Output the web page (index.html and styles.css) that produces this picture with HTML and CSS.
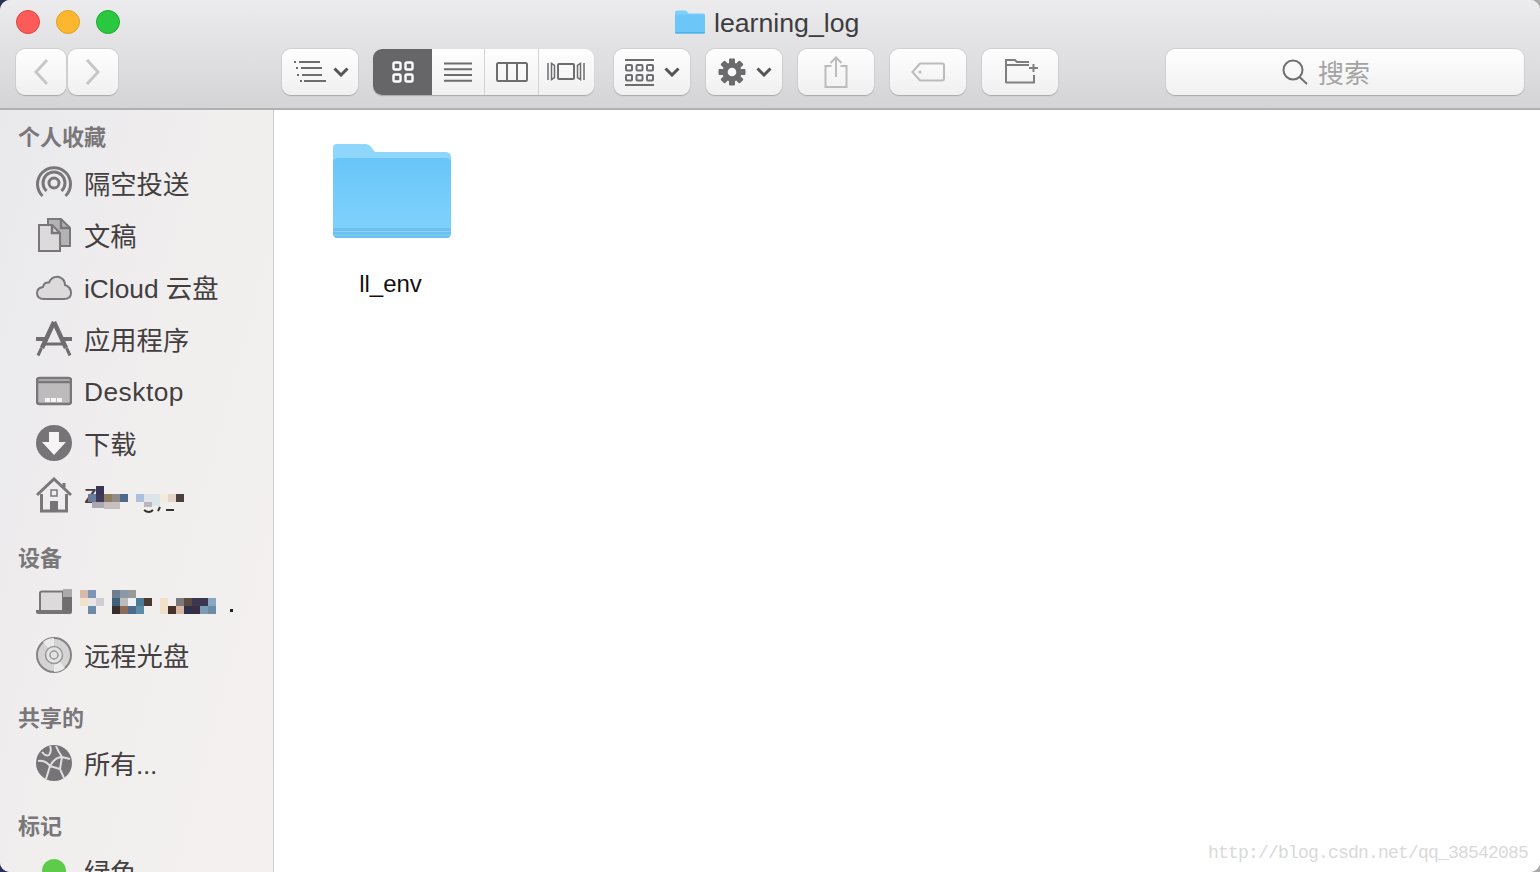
FILE: index.html
```html
<!DOCTYPE html>
<html lang="zh">
<head>
<meta charset="utf-8">
<title>learning_log</title>
<link rel="stylesheet" href="styles.css">
</head>
<body>
<div class="window">
  <header class="chrome">
    <div class="titlebar">
      <div class="lights"><i class="light red"></i><i class="light amber"></i><i class="light green"></i></div>
      <div class="title">
        <svg class="title-icon" width="32" height="26" viewBox="0 0 32 26"><path d="M1 3.500Q1 1.500 3 1.500H11Q12.500 1.500 13.500 3L14.500 4.500H29Q31 4.500 31 6.500V23Q31 25 29 25H3Q1 25 1 23Z" fill="#7fd0fa"/><path d="M1 7Q1 5.500 3 5.500H29Q31 5.500 31 7V23Q31 25 29 25H3Q1 25 1 23Z" fill="#6cc6f7"/><path d="M1 23.500H31" stroke="#57aee0" stroke-width="1"/></svg>
        <span>learning_log</span>
      </div>
    </div>
    <div class="toolbar">
      <div class="nav">
        <button class="btn nav-btn"><svg width="16" height="28" viewBox="0 0 16 28"><path d="M14 2L3 14L14 26" class="s-light"/></svg></button>
        <button class="btn nav-btn"><svg width="16" height="28" viewBox="0 0 16 28"><path d="M2 2L13 14L2 26" class="s-light"/></svg></button>
      </div>
      <button class="btn drop list-drop">
        <svg width="32" height="22" viewBox="0 0 32 22"><path d="M0 1h2M5 1h21M2 7h2M7 7h21M3 14h2M8 14h20M6 20h2M10 20h22" class="s-dark2"/></svg>
        <svg class="chev" width="16" height="10" viewBox="0 0 16 10"><path d="M1.500 1.500L8 8L14.500 1.500" class="s-chev"/></svg>
      </button>
      <div class="segment">
        <div class="seg on"><svg width="22" height="22" viewBox="0 0 22 22"><rect x="1.500" y="1.500" width="7" height="7" rx="1.500"/><rect x="13.500" y="1.500" width="7" height="7" rx="1.500"/><rect x="1.500" y="13.500" width="7" height="7" rx="1.500"/><rect x="13.500" y="13.500" width="7" height="7" rx="1.500"/></svg></div>
        <div class="seg s2"><svg width="28" height="20" viewBox="0 0 28 20"><path d="M0 1.500h28M0 7.300h28M0 13h28M0 18.800h28" class="s-dark2"/></svg></div>
        <div class="seg s3"><svg width="32" height="20" viewBox="0 0 32 20"><rect x="1" y="1" width="30" height="18" rx="1.500" class="s-dark2"/><path d="M11 1v18M21 1v18" class="s-dark2"/></svg></div>
        <div class="seg s4"><svg width="38" height="20" viewBox="0 0 38 20"><rect x="11" y="2" width="16" height="15" rx="1" class="s-dark2"/><path d="M1 1v17M4.500 1.500v16l3-2v-12ZM37 1v17M33.500 1.500v16l-3-2v-12Z" class="s-dark15"/></svg></div>
      </div>
      <button class="btn drop arrange">
        <svg width="29" height="27" viewBox="0 0 29 27"><path d="M0 1h29M0 26h29" class="s-dark2"/><rect x="1" y="6" width="6" height="5.500" rx="1" class="s-dark2"/><rect x="11.500" y="6" width="6" height="5.500" rx="1" class="s-dark2"/><rect x="22" y="6" width="6" height="5.500" rx="1" class="s-dark2"/><rect x="1" y="16" width="6" height="5.500" rx="1" class="s-dark2"/><rect x="11.500" y="16" width="6" height="5.500" rx="1" class="s-dark2"/><rect x="22" y="16" width="6" height="5.500" rx="1" class="s-dark2"/></svg>
        <svg class="chev" width="16" height="10" viewBox="0 0 16 10"><path d="M1.500 1.500L8 8L14.500 1.500" class="s-chev"/></svg>
      </button>
      <button class="btn drop gear">
        <svg width="28" height="28" viewBox="0 0 28 28"><g class="gear-fill"><circle cx="14" cy="14" r="9.500"/><rect x="11" y="0.500" width="6" height="27" rx="1"/><rect x="11" y="0.500" width="6" height="27" rx="1" transform="rotate(45 14 14)"/><rect x="11" y="0.500" width="6" height="27" rx="1" transform="rotate(90 14 14)"/><rect x="11" y="0.500" width="6" height="27" rx="1" transform="rotate(135 14 14)"/></g><circle cx="14" cy="14" r="4.300" class="gear-hole"/></svg>
        <svg class="chev" width="16" height="10" viewBox="0 0 16 10"><path d="M1.500 1.500L8 8L14.500 1.500" class="s-chev"/></svg>
      </button>
      <button class="btn plain"><svg width="24" height="32" viewBox="0 0 24 32"><path d="M7.500 10H1.500V31H22.500V10H16.500M12 21V2M6.500 7L12 1.500L17.500 7" class="s-faint"/></svg></button>
      <button class="btn plain"><svg width="34" height="20" viewBox="0 0 34 20"><path d="M9 1.500H31Q33 1.500 33 3.500V16.500Q33 18.500 31 18.500H9L1.500 10Z" class="s-faint"/><circle cx="9" cy="10" r="1.600" class="faint-dot"/></svg></button>
      <button class="btn plain new-folder"><svg width="34" height="25" viewBox="0 0 34 25"><path d="M1 24V1H10L12 3H24M1 6H24M30 23.500H1M29 24V16M24 9H33M28.500 5V13" class="s-dark2b"/></svg></button>
      <div class="search">
        <svg width="26" height="26" viewBox="0 0 26 26"><circle cx="11" cy="11" r="9.500" class="s-search"/><path d="M17.500 18L25 25" class="s-search"/></svg>
        <span>搜索</span>
      </div>
    </div>
  </header>
  <div class="body">
    <aside class="sidebar">
      <section class="group">
        <h2 class="first">个人收藏</h2>
        <div class="item"><svg width="36" height="36" viewBox="0 0 36 36"><g class="ic air"><path d="M6.500 31A16.500 16.500 0 1 1 29.500 31"/><path d="M10.500 26A11 11 0 1 1 25.500 26"/><circle cx="18" cy="18" r="5"/></g></svg><span>隔空投送</span></div>
        <div class="item"><svg width="36" height="36" viewBox="0 0 36 36"><path d="M12 2H25L34 11V29H12Z" class="fill-mid"/><path d="M25 2V11H34" class="ic"/><path d="M3 8H16L24 16V34H3Z" class="fill-soft"/><path d="M16 8V16H24" class="ic"/></svg><span>文稿</span></div>
        <div class="item"><svg width="36" height="36" viewBox="0 0 36 36"><path d="M8 30Q1 30 1 24Q1 19 7 18Q8 13 13 13.500Q16 7 23 8Q29 10 29 16Q35 18 35 24Q35 30 28 30Z" class="fill-soft"/></svg><span>iCloud 云盘</span></div>
        <div class="item"><svg width="36" height="36" viewBox="0 0 36 36"><g class="app"><path d="M18 1L6 27M18 1L30 27" stroke-width="4.500"/><path d="M0 18H12M24 18H36" stroke-width="4"/><path d="M9 23H27" stroke-width="3"/><path d="M5.500 27L2 34.500M30.500 27L34 34.500" stroke-width="3"/></g></svg><span>应用程序</span></div>
        <div class="item"><svg width="36" height="36" viewBox="0 0 36 36"><rect x="1" y="5" width="34" height="26" rx="2.500" class="fill-mac"/><path d="M1 9H35" class="ic"/><path d="M9 25h5v4h-5zM15 25h5v4h-5zM21 25h5v4h-5z" class="white"/></svg><span class="latin">Desktop</span></div>
        <div class="item"><svg width="36" height="36" viewBox="0 0 36 36"><circle cx="18" cy="18" r="18" class="solid"/><path d="M13 7H23V17H30L18 30L6 17H13Z" class="white"/></svg><span>下载</span></div>
        <div class="item user"><svg width="36" height="36" viewBox="0 0 36 36"><path d="M1 18L18 2L35 18M28 6V11" class="ic-thick"/><path d="M5.500 17V34H30.500V17" class="ic-thick"/><rect x="15" y="13" width="6" height="6" class="ic-thin"/><rect x="14" y="24" width="8" height="10" class="solid"/></svg>
          <span>z</span>
          <svg class="mosaic-user" width="105" height="32" viewBox="0 0 105 32"><path d="M60 24Q65 28 69 24M74 25L76 21M82 24H90" class="frag"/><rect x="12" y="0" width="8" height="8" fill="#3a3555"/><rect x="4" y="8" width="8" height="8" fill="#6b7b9d"/><rect x="12" y="8" width="8" height="8" fill="#3f3a5a"/><rect x="20" y="8" width="8" height="8" fill="#8f7d62"/><rect x="28" y="8" width="8" height="8" fill="#908b87"/><rect x="36" y="8" width="8" height="8" fill="#4e6b8c"/><rect x="8" y="16" width="12" height="6" fill="#aaa8b0"/><rect x="20" y="16" width="16" height="7" fill="#c8c0c0"/><rect x="52" y="8" width="8" height="8" fill="#acc0dc"/><rect x="60" y="16" width="8" height="5" fill="#b8b8bc"/><rect x="60" y="8" width="8" height="8" fill="#e0e4ea"/><rect x="68" y="8" width="8" height="12" fill="#dce6ea"/><rect x="76" y="8" width="8" height="8" fill="#f2ecdc"/><rect x="84" y="8" width="8" height="8" fill="#e5d5c8"/><rect x="92" y="8" width="8" height="8" fill="#4a3f3c"/></svg>
        </div>
      </section>
      <section class="group">
        <h2>设备</h2>
        <div class="item device"><svg width="36" height="36" viewBox="0 0 36 36"><path d="M4 26V8Q4 6.500 6 6.500H27V26Z" class="fill-soft"/><path d="M0 25H36V27Q36 29 34 29H2Q0 29 0 27Z" class="solid"/><rect x="27" y="4" width="9" height="8" fill="#ababab"/><rect x="27" y="12" width="9" height="14" fill="#6f6f6f"/></svg>
          <svg class="mosaic-device" width="160" height="26" viewBox="0 0 160 26"><g><rect x="0" y="0" width="8" height="8" fill="#d9b9a9"/><rect x="8" y="0" width="8" height="8" fill="#7b96b6"/><rect x="0" y="8" width="8" height="8" fill="#f0e1ca"/><rect x="8" y="8" width="8" height="8" fill="#e8e4e8"/><rect x="16" y="8" width="8" height="8" fill="#d0ccd2"/><rect x="8" y="16" width="8" height="8" fill="#6b8ba6"/><rect x="32" y="0" width="8" height="8" fill="#6f7f8f"/><rect x="40" y="0" width="8" height="8" fill="#8898a6"/><rect x="48" y="0" width="8" height="8" fill="#999"/><rect x="32" y="8" width="8" height="8" fill="#3f5f7b"/><rect x="40" y="8" width="8" height="8" fill="#bdbdbd"/><rect x="48" y="8" width="8" height="8" fill="#edf0f5"/><rect x="56" y="8" width="8" height="8" fill="#4a7a96"/><rect x="64" y="8" width="8" height="8" fill="#4a3a30"/><rect x="32" y="16" width="8" height="8" fill="#3a2e2a"/><rect x="40" y="16" width="8" height="8" fill="#8b6b59"/><rect x="48" y="16" width="8" height="8" fill="#4f6b8b"/><rect x="56" y="16" width="8" height="8" fill="#5b8ba6"/><rect x="80" y="8" width="8" height="16" fill="#f0e1c8"/><rect x="96" y="8" width="8" height="8" fill="#7a7a7a"/><rect x="104" y="8" width="8" height="8" fill="#5a4a40"/><rect x="112" y="8" width="16" height="8" fill="#3a3550"/><rect x="128" y="8" width="8" height="8" fill="#8ba6c1"/><rect x="88" y="16" width="8" height="8" fill="#4a3028"/><rect x="96" y="16" width="8" height="8" fill="#d9b9a1"/><rect x="104" y="16" width="8" height="8" fill="#2e3050"/><rect x="112" y="16" width="8" height="8" fill="#3a2e40"/><rect x="120" y="16" width="8" height="8" fill="#7b9bb6"/><rect x="128" y="16" width="8" height="8" fill="#6b8ba6"/><rect x="150" y="19" width="3" height="3" fill="#222"/></g></svg>
        </div>
        <div class="item"><svg width="36" height="36" viewBox="0 0 36 36"><circle cx="18" cy="18" r="17" class="disc"/><path d="M18 18L7 5A17 17 0 0 1 18 1ZM18 18L29 31A17 17 0 0 1 18 35Z" class="disc-sheen"/><circle cx="18" cy="18" r="8.500" class="disc-in"/><circle cx="18" cy="18" r="4" class="disc-in"/></svg><span>远程光盘</span></div>
      </section>
      <section class="group">
        <h2>共享的</h2>
        <div class="item"><svg width="36" height="36" viewBox="0 0 36 36"><circle cx="18" cy="18" r="18" class="solid2"/><path d="M2 16Q9 15 14 21Q19 12 26 12Q22 6 20 1M14 21L10 34M14 21L24 24L28 33M26 12L34 14M24 24L26 12M6 7Q10 12 13 10Q16 6 14 1" class="net"/></svg><span class="all">所有...</span></div>
      </section>
      <section class="group">
        <h2>标记</h2>
        <div class="item"><i class="tag-dot"></i><span>绿色</span></div>
      </section>
    </aside>
    <main class="content">
      <div class="file">
        <svg width="120" height="96" viewBox="0 0 120 96"><defs><linearGradient id="fg" x1="0" y1="0" x2="0" y2="1"><stop offset="0" stop-color="#69c5f8"/><stop offset="1" stop-color="#80d4fc"/></linearGradient></defs><path d="M1 5Q1 1 5 1H33Q37 1 39 4L43 9H113Q119 9 119 14V90Q119 95 114 95H6Q1 95 1 90Z" fill="#8fd6fd"/><path d="M1 20Q1 15 6 15H114Q119 15 119 20V90Q119 95 114 95H6Q1 95 1 90Z" fill="url(#fg)"/><path d="M1 85H119V90Q119 95 114 95H6Q1 95 1 90Z" fill="#6cc1ee"/><path d="M1 88.500H119M1 92H119" stroke="#86d1f7" stroke-width="1"/></svg>
        <span>ll_env</span>
      </div>
      <div class="watermark">http://blog.csdn.net/qq_38542085</div>
    </main>
  </div>
</div>
</body>
</html>
```

FILE: styles.css
```css
* { box-sizing: border-box; }
html, body { margin: 0; height: 100%; overflow: hidden; background: linear-gradient(90deg, #27315a 50%, #a9a9a9 50%); }
.window {
  width: 1540px; height: 872px; display: flex; flex-direction: column;
  border-radius: 10px; overflow: hidden; background: #fff;
  font-family: "Liberation Sans", "Noto Sans CJK SC", sans-serif;
}
.chrome {
  height: 110px; flex: none; display: flex; flex-direction: column;
  background: linear-gradient(#ecebed, #d4d3d5);
  border-bottom: 2px solid #b0afb1;
}
.titlebar { height: 49px; flex: none; display: flex; align-items: flex-start; position: relative; }
.lights { display: flex; gap: 16px; padding: 10px 0 0 16px; width: 660px; }
.light { width: 24px; height: 24px; border-radius: 50%; display: block; border: 1px solid; }
.red { background: #fc5b57; border-color: #e0443e; }
.amber { background: #fdb72f; border-color: #dea123; }
.green { background: #2ac840; border-color: #1fa72f; }
.title { display: flex; align-items: center; gap: 8px; margin-left: 14px; height: 46px; color: #403c3e; font-size: 26.700px; }
.title-icon { display: block; margin-top: -3px; }
.toolbar { display: flex; align-items: flex-start; padding-left: 16px; }
.btn {
  height: 46px; padding: 0; margin: 0; display: flex; align-items: center; justify-content: center;
  border: 0; border-radius: 9px; background: linear-gradient(#fefefe, #f1f0f1);
  box-shadow: 0 1px 1px #a9a8aa, 0 0 0 1px #d2d1d3;
}
.nav { display: flex; gap: 2px; margin-right: 164px; }
.nav-btn { width: 50px; }
.plain, .drop { width: 76px; margin-right: 16px; }
.drop { gap: 10px; }
.list-drop { margin-right: 15px; gap: 7px; padding-left: 3px; }
.arrange { margin-right: 16px; }
.gear { padding-left: 2px; }
.new-folder { padding-left: 4px; padding-bottom: 2px; }
.segment {
  width: 221px; height: 46px; margin-right: 20px; display: flex; border-radius: 9px; overflow: hidden;
  background: linear-gradient(#fefefe, #f1f0f1); box-shadow: 0 1px 1px #a9a8aa;
}
.seg { display: flex; align-items: center; justify-content: center; border-right: 1px solid #d3d2d4; }
.seg.on { width: 59px; background: #666567; border-right: 0; }
.seg.on rect { fill: none; stroke: #fff; stroke-width: 2.400; }
.s2 { width: 53px; }
.s3 { width: 54px; }
.s4 { width: 55px; border-right: 0; padding-right: 2px; }
.search {
  width: 358px; height: 46px; margin-left: 92px; display: flex; align-items: center; justify-content: center; gap: 10px;
  border-radius: 9px; background: linear-gradient(#fefefe, #f2f1f2);
  box-shadow: 0 1px 1px #a9a8aa, 0 0 0 1px #d2d1d3;
  color: #a5a4a5; font-size: 26px; padding-right: 38px;
}
.search span { padding-bottom: 2px; }
svg { display: block; flex: none; }
.s-light { fill: none; stroke: #c8c7c8; stroke-width: 3; }
.s-dark2 { fill: none; stroke: #6d6c6e; stroke-width: 2; }
.s-dark15 { fill: none; stroke: #6d6c6e; stroke-width: 1.500; }
.s-dark2b { fill: none; stroke: #7f7e80; stroke-width: 2; }
.s-chev { fill: none; stroke: #555456; stroke-width: 3; }
.s-faint { fill: none; stroke: #bdbcbd; stroke-width: 2; }
.faint-dot { fill: #bdbcbd; }
.s-search { fill: none; stroke: #6f6e70; stroke-width: 2; }
.gear-fill { fill: #6b6a6c; }
.gear-hole { fill: #f8f8f8; }
.body { flex: 1; display: flex; min-height: 0; }
.sidebar {
  width: 274px; flex: none; overflow: hidden; padding-top: 7px;
  border-right: 1px solid #d0cfd0;
  background: linear-gradient(105deg, #e9e9ec 0%, #f1eeee 50%, #f3f0ef 100%);
}
.group { margin-bottom: 16px; }
.group h2 { margin: 0 0 0 18px; height: 40px; padding-bottom: 2px; display: flex; align-items: center; font-size: 22px; font-weight: 700; color: #79777a; }
.group h2.first { padding-bottom: 4px; }
.item { height: 52px; display: flex; align-items: center; gap: 12px; padding-left: 36px; font-size: 26.300px; color: #433f41; position: relative; }
.item span { padding-bottom: 2px; }
.item span.latin { padding: 2px 0 0; letter-spacing: 0.500px; }
.item span.all { letter-spacing: -0.300px; }
.mosaic-user { position: absolute; left: 84px; top: 17px; }
.mosaic-device { position: absolute; left: 80px; top: 13px; }
.ic, .ic-thick, .ic-thin { fill: none; stroke: #79777a; stroke-width: 2.500; }
.air { stroke-width: 3; }
.ic-thick { stroke-width: 3; }
.ic-thin { stroke-width: 1.500; }
.fill-mid { fill: #b4b3b4; stroke: #79777a; stroke-width: 2; }
.fill-soft { fill: #dcdadb; stroke: #79777a; stroke-width: 2; }
.fill-mac { fill: #bdbbbc; stroke: #79777a; stroke-width: 2.500; }
.app { fill: none; stroke: #6f6d70; }
.white { fill: #f6f4f4; }
.solid { fill: #767476; }
.solid2 { fill: #767476; }
.frag { fill: none; stroke: #333; stroke-width: 2; }
.net { fill: none; stroke: #e0dfe0; stroke-width: 2; }
.disc { fill: #d5d4d5; stroke: #858385; stroke-width: 2; }
.disc-sheen { fill: #ebeaeb; }
.disc-in { fill: #e4e3e4; stroke: #9a989a; stroke-width: 1.500; }
.tag-dot { width: 24px; height: 24px; border-radius: 50%; background: #5fcb4b; margin-left: 6px; margin-right: 6px; display: block; }
.content { flex: 1; position: relative; padding: 33px 0 0 58px; background: #fff; }
.file { width: 120px; display: flex; flex-direction: column; align-items: center; font-size: 24px; color: #111; }
.file span { margin-top: 31px; margin-right: 3px; }
.watermark { position: absolute; right: 12px; bottom: 9px; font-family: "Liberation Mono", monospace; font-size: 18px; letter-spacing: -0.800px; color: #d9d9d9; }
```
